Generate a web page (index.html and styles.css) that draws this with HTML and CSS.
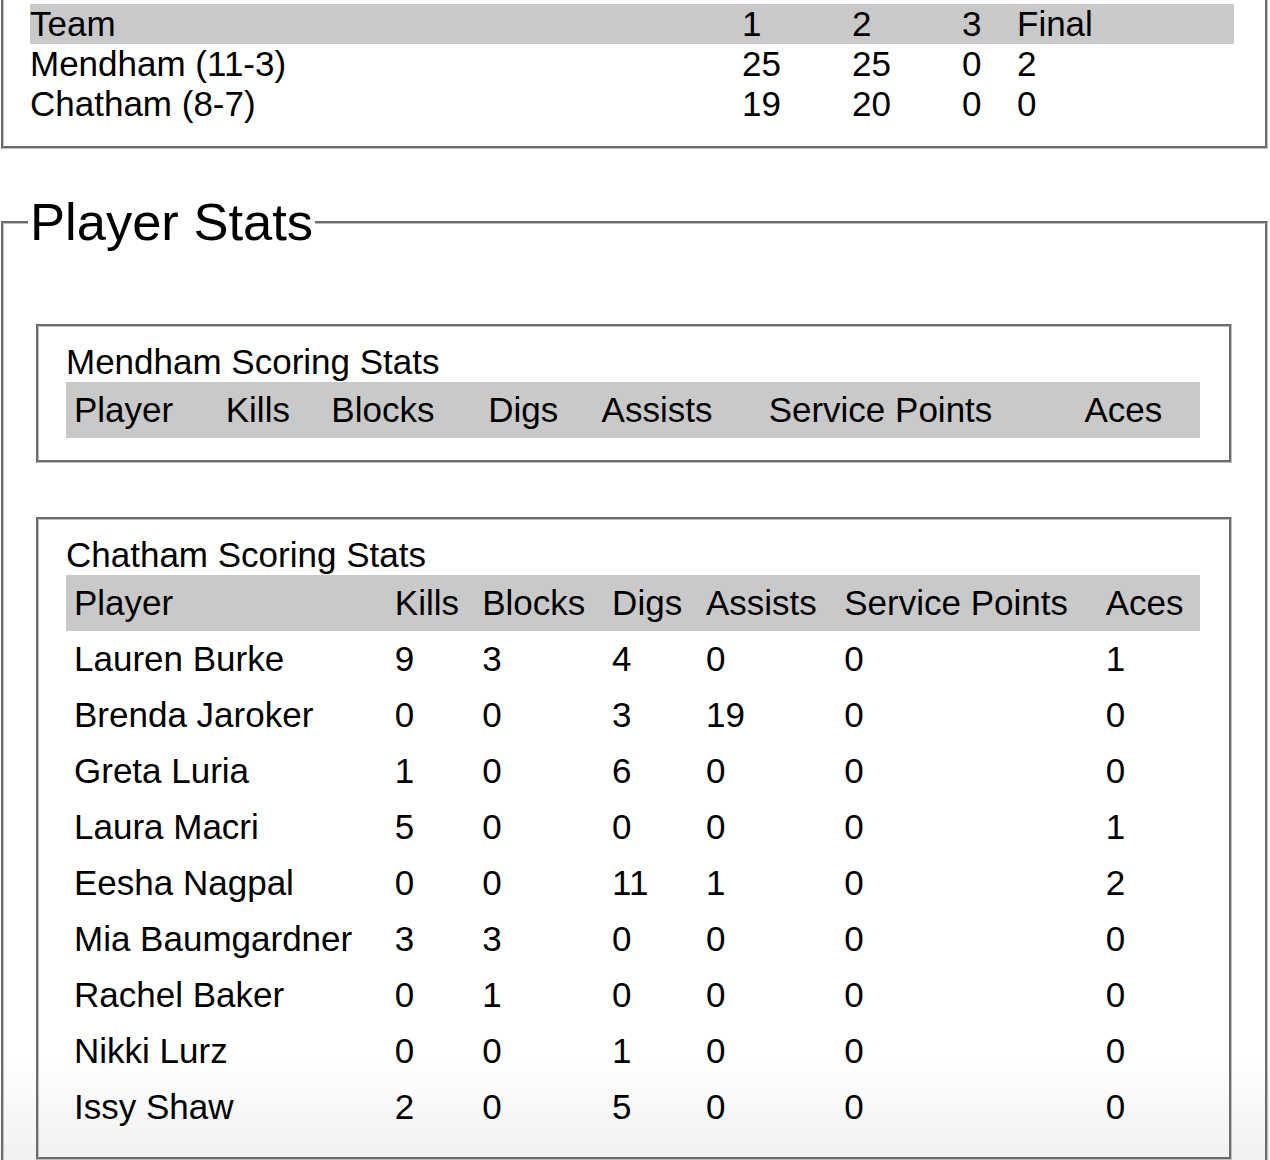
FILE: index.html
```html
<!DOCTYPE html>
<html lang="en">
<head>
<meta charset="utf-8">
<title>Mendham vs Chatham</title>
<link rel="stylesheet" href="styles.css">
</head>
<body>
<fieldset class="box score-box">
  <table class="score-table">
    <tr class="head"><th class="c-team">Team</th><th class="c-set">1</th><th class="c-set">2</th><th class="c-set3">3</th><th>Final</th></tr>
    <tr><td>Mendham (11-3)</td><td>25</td><td>25</td><td>0</td><td>2</td></tr>
    <tr><td>Chatham (8-7)</td><td>19</td><td>20</td><td>0</td><td>0</td></tr>
  </table>
</fieldset>

<fieldset class="box stats-box">
  <legend class="stats-legend">Player Stats</legend>

  <fieldset class="team-box first">
    <table class="stat-table">
      <caption>Mendham Scoring Stats</caption>
      <thead>
        <tr class="head"><th>Player</th><th>Kills</th><th>Blocks</th><th>Digs</th><th>Assists</th><th>Service Points</th><th>Aces</th></tr>
      </thead>
    </table>
  </fieldset>

  <fieldset class="team-box">
    <table class="stat-table">
      <caption>Chatham Scoring Stats</caption>
      <thead>
        <tr class="head"><th>Player</th><th>Kills</th><th>Blocks</th><th>Digs</th><th>Assists</th><th>Service Points</th><th>Aces</th></tr>
      </thead>
      <tbody>
        <tr><td>Lauren Burke</td><td>9</td><td>3</td><td>4</td><td>0</td><td>0</td><td>1</td></tr>
        <tr><td>Brenda Jaroker</td><td>0</td><td>0</td><td>3</td><td>19</td><td>0</td><td>0</td></tr>
        <tr><td>Greta Luria</td><td>1</td><td>0</td><td>6</td><td>0</td><td>0</td><td>0</td></tr>
        <tr><td>Laura Macri</td><td>5</td><td>0</td><td>0</td><td>0</td><td>0</td><td>1</td></tr>
        <tr><td>Eesha Nagpal</td><td>0</td><td>0</td><td>11</td><td>1</td><td>0</td><td>2</td></tr>
        <tr><td>Mia Baumgardner</td><td>3</td><td>3</td><td>0</td><td>0</td><td>0</td><td>0</td></tr>
        <tr><td>Rachel Baker</td><td>0</td><td>1</td><td>0</td><td>0</td><td>0</td><td>0</td></tr>
        <tr><td>Nikki Lurz</td><td>0</td><td>0</td><td>1</td><td>0</td><td>0</td><td>0</td></tr>
        <tr><td>Issy Shaw</td><td>2</td><td>0</td><td>5</td><td>0</td><td>0</td><td>0</td></tr>
      </tbody>
    </table>
  </fieldset>
</fieldset>
</body>
</html>
```

FILE: styles.css
```css
html {
  background-color: #fff;
  background-image: linear-gradient(to bottom, #ffffff 0, #ffffff 1055px, #f1f1f1 1160px);
  background-size: 100% 1160px;
  background-repeat: no-repeat;
}

body {
  margin: 0;
  font-family: "Liberation Sans", Arial, Helvetica, sans-serif;
  font-size: 35px;
  line-height: 40px;
  color: #000;
}

.box {
  border: 3px groove #c0c0c0;
  margin: 0 2px 0 1px;
  min-width: 0;
}

.score-box {
  border-top: none;
  padding: 4px 31px 22px 26px;
}

.stats-box {
  margin-top: 43px;
  padding: 0 25px 40px 26px;
}

.stats-legend {
  font-size: 52.5px;
  line-height: 60px;
  padding: 0 2px;
  margin-left: -2px;
}

.team-box {
  border: 3px groove #c0c0c0;
  margin: 54px 8px 0 6px;
  padding: 15px 29px 22px 27px;
  min-width: 0;
}

.team-box.first {
  margin-top: 72px;
}

table {
  border-collapse: collapse;
  width: 100%;
}

th, td {
  font-weight: normal;
  text-align: left;
  vertical-align: middle;
}

.head {
  background: #c9c9c9;
}

.score-table th,
.score-table td {
  padding: 0;
}

.score-table .c-team {
  width: 712px;
}

.score-table .c-set {
  width: 110px;
}

.score-table .c-set3 {
  width: 55px;
}

.stat-table caption {
  text-align: left;
  caption-side: top;
}

.stat-table th,
.stat-table td {
  padding: 8px;
}
```
